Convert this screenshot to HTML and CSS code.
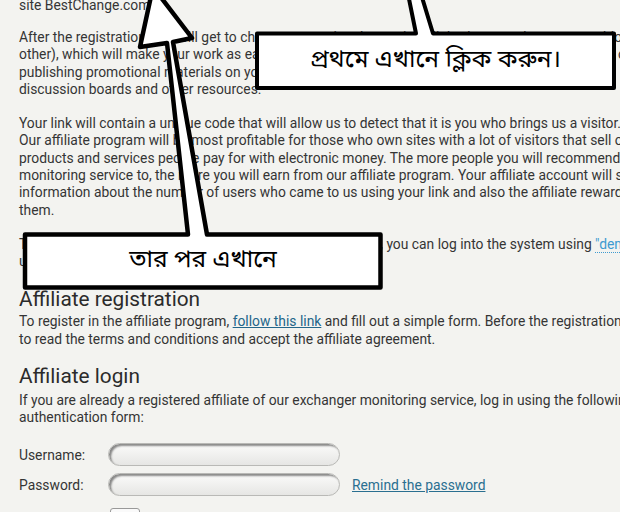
FILE: index.html
```html
<!DOCTYPE html>
<html>
<head>
<meta charset="utf-8">
<link rel="stylesheet" href="styles.css">
</head>
<body>
<div class="page">
  <p class="p-first">site BestChange.com.</p>
  <p class="p-gap1">After the registration, you will get to choose promotional materials (links, banners, buttons, text blocks and<br>other), which will make your work as easy as possible. You can attract visitors by publishing them on your<br>publishing promotional materials on your sites, blogs, social networks, and also placing them on<br>discussion boards and other resources.</p>
  <p class="p-gap">Your link will contain a unique code that will allow us to detect that it is you who brings us a visitor.<br>Our affiliate program will be most profitable for those who own sites with a lot of visitors that sell or buy<br>products and services people pay for with electronic money. The more people you will recommend our<br>monitoring service to, the more you will earn from our affiliate program. Your affiliate account will show<br>information about the number of users who came to us using your link and also the affiliate rewards for<br>them.</p>
  <p class="p-gap">To get familiar with all the features of your affiliate account, you can log into the system using <span class="demo">"demo"</span><br>username and password.</p>
  <h2 class="h-first">Affiliate registration</h2>
  <p class="p-after-h p-reg">To register in the affiliate program, <a class="link" href="#">follow this link</a> and fill out a simple form. Before the registration, be sure<br>to read the terms and conditions and accept the affiliate agreement.</p>
  <h2 class="h-next">Affiliate login</h2>
  <p class="p-after-h p-login">If you are already a registered affiliate of our exchanger monitoring service, log in using the following<br>authentication form:</p>
  <form class="login">
    <div class="row"><span class="label">Username:</span><span class="field"></span></div>
    <div class="row"><span class="label">Password:</span><span class="field"></span><a class="remind" href="#">Remind the password</a></div>
    <div class="row row-btn"><span class="label"></span><span class="check"></span></div>
  </form>
</div>

<svg class="overlay" width="620" height="512" viewBox="0 0 620 512">
  <path d="M257 33.5 L416 33.5 L408 -6 L421 -6 L433 33.5 L614 33.5 L614 88 L257 88 Z" fill="#fff" stroke="#000" stroke-width="4" stroke-linejoin="round"/>
  <path d="M25 234.5 L188 234.5 L167 43 L140 47 L153 -13 L192 38 L173 42 L207 234.5 L380.5 234.5 L380.5 287.5 L25 287.5 Z" fill="#fff" stroke="#000" stroke-width="4.5" stroke-linejoin="round"/>
</svg>
<div class="note note-1">প্রথমে এখানে ক্লিক করুন।</div>
<div class="note note-2">তার পর এখানে</div>
</body>
</html>
```
FILE: styles.css
```css
html, body {
  margin: 0;
  padding: 0;
}
body {
  width: 620px;
  height: 512px;
  overflow: hidden;
  position: relative;
  background: #f3f3f0;
  font-family: Roboto, "Liberation Sans", sans-serif;
  color: #353535;
}
.page {
  margin-top: -3px;
  padding-left: 19px;
  border-left: 4px solid #e8e8e4;
  margin-left: -4px;
  width: 800px;
  font-size: 13.85px;
  line-height: 17.3px;
}
p {
  margin: 0;
  white-space: nowrap;
}
.p-gap1 { margin-top: 14.7px; }
.p-gap { margin-top: 16.9px; }
.p-reg { margin-top: 2px; }
.p-login { margin-top: 3.5px; }
h2 {
  margin: 0;
  font-size: 20.8px;
  line-height: 24px;
  font-weight: 400;
  color: #2b2b2b;
}
.h-first { margin-top: 17px; }
.h-next { margin-top: 16.5px; }
.link {
  color: #23668a;
  text-decoration: underline;
}
.demo {
  color: #3f9bd0;
  border-bottom: 1px dotted #3f9bd0;
}
.login {
  margin: 15.5px 0 0;
  display: flex;
  flex-direction: column;
  gap: 6px;
}
.row {
  display: flex;
  align-items: center;
  height: 24px;
}
.label {
  width: 89px;
  flex: none;
  padding-top: 3px;
}
.field {
  width: 232px;
  height: 23px;
  box-sizing: border-box;
  border-radius: 12px;
  border: 1px solid #b9b9b6;
  background: linear-gradient(#fbfbfa, #e6e6e4);
  box-shadow: inset 2px 2px 2px rgba(0, 0, 0, 0.45);
}
.remind {
  margin-left: 12px;
  padding-top: 3px;
  color: #2a6f90;
  text-decoration: underline;
}
.row-btn {
  margin-top: 6px;
  align-items: flex-start;
}
.check {
  margin-left: 2px;
  width: 30px;
  height: 20px;
  box-sizing: border-box;
  border: 1px solid #999;
  border-radius: 3px;
  background: #fafafa;
}
.overlay {
  position: absolute;
  left: 0;
  top: 0;
  pointer-events: none;
}
.note {
  position: absolute;
  display: flex;
  align-items: center;
  justify-content: center;
  font-family: "Noto Sans Bengali", "Noto Serif Bengali", "Lohit Bengali", "Mukti", "Noto Sans", sans-serif;
  color: #000;
  font-size: 24.5px;
}
.note-1 {
  left: 259px;
  top: 36px;
  width: 353px;
  height: 50px;
}
.note-2 {
  left: 27px;
  top: 237px;
  width: 352px;
  height: 48px;
}
```
